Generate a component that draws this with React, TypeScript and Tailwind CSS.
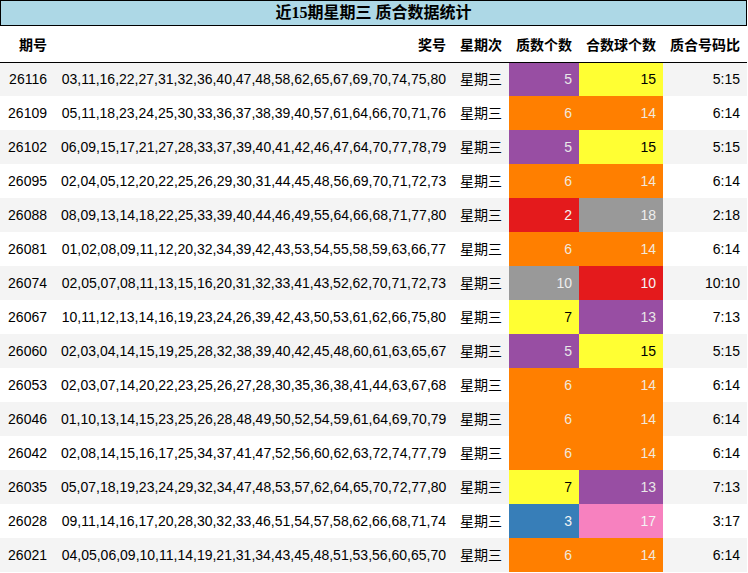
import { FC } from "react";

type Row = {
  issue: string;
  nums: string;
  prime: number;
  composite: number;
};

const rows: Row[] = [
  { issue: "26116", nums: "03,11,16,22,27,31,32,36,40,47,48,58,62,65,67,69,70,74,75,80", prime: 5, composite: 15 },
  { issue: "26109", nums: "05,11,18,23,24,25,30,33,36,37,38,39,40,57,61,64,66,70,71,76", prime: 6, composite: 14 },
  { issue: "26102", nums: "06,09,15,17,21,27,28,33,37,39,40,41,42,46,47,64,70,77,78,79", prime: 5, composite: 15 },
  { issue: "26095", nums: "02,04,05,12,20,22,25,26,29,30,31,44,45,48,56,69,70,71,72,73", prime: 6, composite: 14 },
  { issue: "26088", nums: "08,09,13,14,18,22,25,33,39,40,44,46,49,55,64,66,68,71,77,80", prime: 2, composite: 18 },
  { issue: "26081", nums: "01,02,08,09,11,12,20,32,34,39,42,43,53,54,55,58,59,63,66,77", prime: 6, composite: 14 },
  { issue: "26074", nums: "02,05,07,08,11,13,15,16,20,31,32,33,41,43,52,62,70,71,72,73", prime: 10, composite: 10 },
  { issue: "26067", nums: "10,11,12,13,14,16,19,23,24,26,39,42,43,50,53,61,62,66,75,80", prime: 7, composite: 13 },
  { issue: "26060", nums: "02,03,04,14,15,19,25,28,32,38,39,40,42,45,48,60,61,63,65,67", prime: 5, composite: 15 },
  { issue: "26053", nums: "02,03,07,14,20,22,23,25,26,27,28,30,35,36,38,41,44,63,67,68", prime: 6, composite: 14 },
  { issue: "26046", nums: "01,10,13,14,15,23,25,26,28,48,49,50,52,54,59,61,64,69,70,79", prime: 6, composite: 14 },
  { issue: "26042", nums: "02,08,14,15,16,17,25,34,37,41,47,52,56,60,62,63,72,74,77,79", prime: 6, composite: 14 },
  { issue: "26035", nums: "05,07,18,19,23,24,29,32,34,47,48,53,57,62,64,65,70,72,77,80", prime: 7, composite: 13 },
  { issue: "26028", nums: "09,11,14,16,17,20,28,30,32,33,46,51,54,57,58,62,66,68,71,74", prime: 3, composite: 17 },
  { issue: "26021", nums: "04,05,06,09,10,11,14,19,21,31,34,43,45,48,51,53,56,60,65,70", prime: 6, composite: 14 },
];

const red = "bg-[#e41a1c] text-[#f4f4f4]";
const blue = "bg-[#377eb8] text-[#f4f4f4]";
const purple = "bg-[#984ea3] text-[#e8e8e8]";
const orange = "bg-[#ff7f00] text-[#f2e8dc]";
const yellow = "bg-[#ffff33] text-black";
const gray = "bg-[#999999] text-[#eeeeee]";
const pink = "bg-[#f781bf] text-[#f4f4f4]";

const primeColor: Record<number, string> = {
  2: red,
  3: blue,
  5: purple,
  6: orange,
  7: yellow,
  10: gray,
};

const compositeColor: Record<number, string> = {
  10: red,
  13: purple,
  14: orange,
  15: yellow,
  17: pink,
  18: gray,
};

const cjk = "font-['Liberation_Sans','Noto_Sans_CJK_SC',sans-serif]";

const App: FC = () => {
  return (
    <div className={`w-[748px] h-[573px] bg-white text-black text-[14px] ${cjk}`}>
      <div className="w-[747px] h-[26px] border border-black bg-[#add8e6] flex items-center justify-center">
        <h2 className="font-['Liberation_Serif','Noto_Sans_CJK_SC',serif] font-bold text-[16px] leading-none">
          近15期星期三 质合数据统计
        </h2>
      </div>
      <table className="w-[747px] table-fixed border-collapse">
        <colgroup>
          <col className="w-[54px]" />
          <col className="w-[399px]" />
          <col className="w-[56px]" />
          <col className="w-[70px]" />
          <col className="w-[84px]" />
          <col className="w-[84px]" />
        </colgroup>
        <thead>
          <tr className="h-[36px] border-b border-black font-bold">
            <th className="px-[7px] text-right font-bold pt-[3px]">期号</th>
            <th className="px-[7px] text-right font-bold pt-[3px]">奖号</th>
            <th className="px-[7px] text-right font-bold pt-[3px]">星期次</th>
            <th className="px-[7px] text-right font-bold pt-[3px]">质数个数</th>
            <th className="px-[7px] text-right font-bold pt-[3px]">合数球个数</th>
            <th className="px-[7px] text-right font-bold pt-[3px]">质合号码比</th>
          </tr>
        </thead>
        <tbody>
          {rows.map((row, index) => (
            <tr
              key={row.issue}
              className={`h-[34px] ${index % 2 === 0 ? "bg-[#f4f4f4]" : "bg-white"}`}
            >
              <td className="px-[7px] text-right whitespace-nowrap">{row.issue}</td>
              <td className="px-[7px] text-right whitespace-nowrap">{row.nums}</td>
              <td className="px-[7px] text-right whitespace-nowrap">星期三</td>
              <td className={`px-[7px] text-right ${primeColor[row.prime]}`}>{row.prime}</td>
              <td className={`px-[7px] text-right ${compositeColor[row.composite]}`}>
                {row.composite}
              </td>
              <td className="px-[7px] text-right whitespace-nowrap">
                {row.prime}:{row.composite}
              </td>
            </tr>
          ))}
        </tbody>
      </table>
    </div>
  );
};

export default App;
